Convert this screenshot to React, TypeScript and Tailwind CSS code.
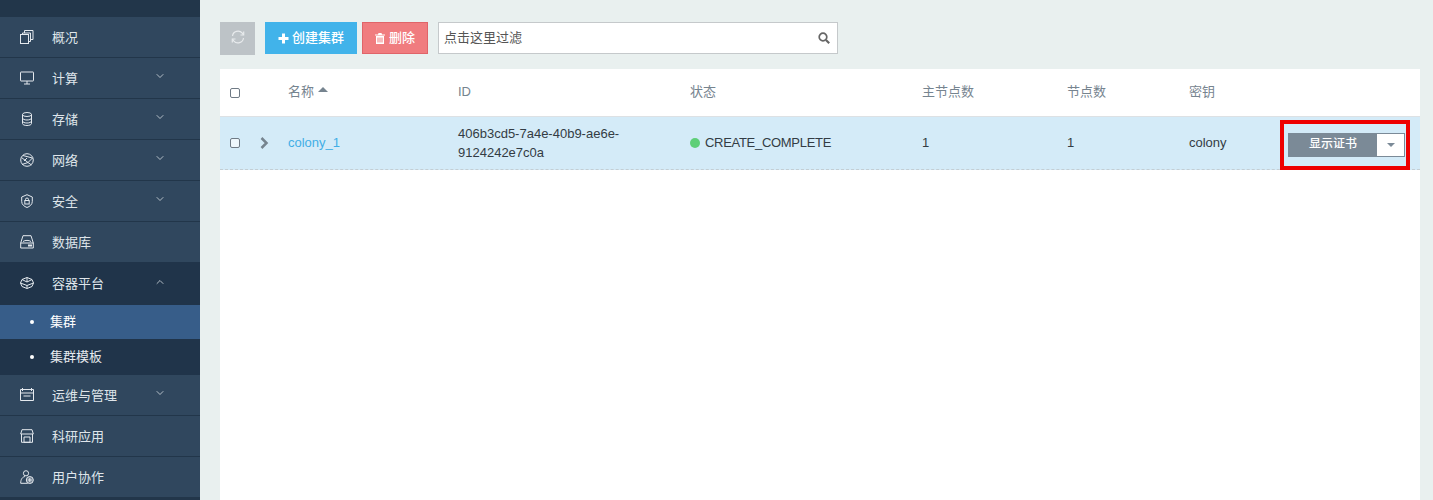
import { ChevronDown, ChevronUp } from 'lucide-react';
import type { ReactNode } from 'react';

const font = 'font-["Liberation_Sans","Noto_Sans_CJK_SC",sans-serif]';

function Icon({ children }: { children: ReactNode }) {
  return (
    <svg width="14" height="14" viewBox="0 0 14 14" fill="none" stroke="#e4e9ee" strokeWidth="1" className="mb-px shrink-0">
      {children}
    </svg>
  );
}

const icons: Record<string, ReactNode> = {
  overview: (
    <>
      <path d="M4.5 3V.5h8.5v9h-3" />
      <path d="M2.5 4.5V3h8v8.5H9" />
      <rect x="0.5" y="4.5" width="8" height="9" />
    </>
  ),
  compute: (
    <>
      <rect x="0.5" y="1" width="13" height="9" rx="0.5" />
      <path d="M7 10v3M4 13h6" />
    </>
  ),
  storage: (
    <>
      <ellipse cx="7" cy="2.5" rx="4.5" ry="2" />
      <path d="M2.5 2.5v9c0 1.2 2 2 4.5 2s4.5-.8 4.5-2v-9M2.5 6c0 1.2 2 2 4.5 2s4.5-.8 4.5-2M2.5 9c0 1.2 2 2 4.5 2s4.5-.8 4.5-2" />
    </>
  ),
  network: (
    <>
      <circle cx="7" cy="7" r="6.3" />
      <path d="M1.5 4.5 8 9.5l-6 2M3 2.5l9.5 2.5L8 9.5l3.5 2.5M7 5 4 8" />
    </>
  ),
  security: (
    <>
      <path d="M7 .7 12.3 3v4.5c0 3-2.5 5-5.3 6-2.800-1-5.300-3-5.300-6V3z" />
      <rect x="4.800" y="6.500" width="4.400" height="3.500" />
      <path d="M5.500 6.500V5.500a1.500 1.500 0 0 1 3 0v1" />
    </>
  ),
  database: (
    <>
      <path d="M3 .7h8l2.300 7.300v5H.7V8z" />
      <path d="M3 6.500c2-1.500 6-1.500 8 0M.7 8h12.600" />
      <rect x="8" y="9.500" width="4" height="2" fill="#e4e9ee" stroke="none" />
    </>
  ),
  container: (
    <>
      <path d="M7 1.500 12 3.500 13.500 7 12 10.500 7 12.500 2 10.500.5 7 2 3.500z" strokeLinejoin="round" />
      <path d="M2 3.500 7 6l5-2.500M7 1.500V6M.5 7 7 9.500 13.500 7M7 9.500v3" />
    </>
  ),
  ops: (
    <>
      <path d="M.5 1.500h13v11H.5z" />
      <path d="M2.500 0v3M11.500 0v3M0.500 5h13M3.500 8h7" />
    </>
  ),
  apps: (
    <>
      <path d="M2 .7h10l1.300 4.300H.7z" />
      <path d="M1.500 5v8.300h11V5M4 8h6v5.300H4z" />
    </>
  ),
  users: (
    <>
      <circle cx="6" cy="3.300" r="2.600" />
      <path d="M5 6.500C2.500 7 .7 9 .7 13.300h7" />
      <circle cx="9.800" cy="10" r="3.500" fill="#e4e9ee" fillOpacity="0.35" />
      <path d="M9.800 8v4M7.800 10h4" />
    </>
  ),
};

type NavItem = { label: string; icon: string; arrow?: boolean };

function NavRow({ label, icon, arrow }: NavItem) {
  return (
    <div className="flex h-10 items-center pl-5">
      <Icon>{icons[icon]}</Icon>
      <span className="ml-[18px] w-[102px] pt-px text-[13px] text-[#dfe5ea]">{label}</span>
      {arrow && <ChevronDown size={12} strokeWidth={1.500} className="mb-1 text-[#dfe5ea]" />}
    </div>
  );
}

const groupA: NavItem[] = [
  { label: '概况', icon: 'overview' },
  { label: '计算', icon: 'compute', arrow: true },
  { label: '存储', icon: 'storage', arrow: true },
  { label: '网络', icon: 'network', arrow: true },
  { label: '安全', icon: 'security', arrow: true },
  { label: '数据库', icon: 'database' },
];

const groupB: NavItem[] = [
  { label: '运维与管理', icon: 'ops', arrow: true },
  { label: '科研应用', icon: 'apps' },
  { label: '用户协作', icon: 'users' },
];

function Sidebar() {
  return (
    <aside className="flex h-[500px] w-[200px] shrink-0 flex-col bg-[#22364a]">
      <div className="h-[17px] shrink-0" />
      <div className="flex flex-col gap-px bg-[#22364a]">
        {groupA.map((item) => (
          <div key={item.label} className="bg-[#30475e]">
            <NavRow {...item} />
          </div>
        ))}
      </div>

      {/* open group */}
      <div className="bg-[#20344a]">
        <div className="flex h-[43px] items-center pl-5">
          <Icon>{icons.container}</Icon>
          <span className="ml-[18px] w-[102px] text-[13px] text-[#dfe5ea]">容器平台</span>
          <ChevronUp size={12} strokeWidth={1.500} className="mb-1 text-[#dfe5ea]" />
        </div>
        <div className="flex h-[34px] items-center bg-[#375d89] pl-[30px] text-[13px] text-white">
          <span className="mr-[16px] size-[4px] rounded-full bg-white" />
          集群
        </div>
        <div className="flex h-9 items-center pl-[30px] text-[13px] text-[#e6eaee]">
          <span className="mr-[16px] size-[4px] rounded-full bg-white" />
          集群模板
        </div>
      </div>

      <div className="flex flex-col gap-px bg-[#22364a]">
        {groupB.map((item) => (
          <div key={item.label} className="bg-[#30475e]">
            <NavRow {...item} />
          </div>
        ))}
      </div>
    </aside>
  );
}

function Checkbox() {
  return <span className="block size-[10px] rounded-[2px] border border-[#6f7a85] bg-white/60" />;
}

function Toolbar() {
  return (
    <div className="flex h-[33px] items-start">
      <button className="flex h-[33px] w-[35px] items-center justify-center pb-[3px] bg-[#bdc3c7]">
        <svg width="14" height="14" viewBox="0 0 14 14" fill="none" stroke="#e8ebed" strokeWidth="1.200">
          <path d="M1.500 6a5.500 5.500 0 0 1 9.800-2.800L12.500 5M12.500 8a5.500 5.500 0 0 1-9.800 2.800L1.500 9" />
          <path d="M12.700 1.500V5H9.500M1.300 12.500V9h3.200" />
        </svg>
      </button>
      <button className="ml-[10px] flex h-8 w-[92px] items-center justify-center gap-[3px] bg-[#41b3ea] text-[13px] font-medium text-white">
        <svg width="11" height="11" viewBox="0 0 11 11" fill="#fff">
          <path d="M4 .5h3V4h3.500v3H7v3.500H4V7H.5V4H4z" />
        </svg>
        创建集群
      </button>
      <button className="ml-[5px] flex h-8 w-[66px] items-center justify-center gap-1 border border-[#e06469] bg-[#f07c7f] text-[13px] font-medium text-white">
        <svg width="10" height="11" viewBox="0 0 10 11" fill="#fff">
          <path d="M3.500 0h3l.5 1.500h3v1H0v-1h3zM1 3h8v8H1zm1.500 1.500v5h1v-5zm2 0v5h1v-5zm2 0v5h1v-5z" fillRule="evenodd" />
        </svg>
        删除
      </button>
      <div className="ml-[10px] flex h-8 w-[400px] items-center justify-between border border-[#c5c9cb] bg-white pl-[5px] pr-[7px] text-[13px] text-[#555]">
        点击这里过滤
        <svg width="12" height="12" viewBox="0 0 12 12" fill="none" stroke="#666" strokeWidth="1.700">
          <circle cx="5" cy="5" r="3.800" />
          <path d="m8 8 3.200 3.200" strokeWidth="2.200" />
        </svg>
      </div>
    </div>
  );
}

function Table() {
  return (
    <div className="mt-[14px] min-h-0 flex-1 bg-white text-[13px]">
      <div className="grid h-[48px] grid-cols-[68px_170px_232px_232px_145px_122px_1fr] items-center border-b border-[#dde1e4] pb-[2px] text-[#76848f]">
        <div className="pl-[10px] pt-[2px]"><Checkbox /></div>
        <div className="flex items-center gap-1">
          名称
          <span className="mb-1 size-0 border-x-[5px] border-b-[5px] border-x-transparent border-b-[#76848f]" />
        </div>
        <div>ID</div>
        <div>状态</div>
        <div>主节点数</div>
        <div>节点数</div>
        <div>密钥</div>
      </div>

      <div className="grid h-[53px] grid-cols-[68px_170px_232px_232px_145px_122px_1fr] items-center border-b border-dashed border-[#c4ced4] bg-[#d4ebf8] leading-[19px] text-[#333c44]">
        <div className="flex items-center pl-[10px]">
          <Checkbox />
          <svg width="9" height="12" viewBox="0 0 9 12" fill="none" stroke="#76848f" strokeWidth="2.500" className="mb-px ml-[20px]">
            <path d="M1.500 1 6.500 6l-5 5" />
          </svg>
        </div>
        <div className="pb-[2px] text-[#41aee6]">colony_1</div>
        <div className="w-[190px]">406b3cd5-7a4e-40b9-ae6e-9124242e7c0a</div>
        <div className="flex items-center gap-[5px] pb-[2px] tracking-[-0.3px]">
          <span className="mt-[2px] size-[10px] rounded-full bg-[#5ecf78]" />
          CREATE_COMPLETE
        </div>
        <div className="pb-[2px]">1</div>
        <div className="pb-[2px]">1</div>
        <div className="relative h-full">
          <span className="absolute left-0 top-[16px]">colony</span>
          {/* annotation box over the action button */}
          <div className="absolute left-[91px] top-[3px] flex h-[50px] w-[130px] items-center justify-end border-4 border-[#ee0000] pr-[1px]">
            <div className="flex h-6 w-[117px] border border-[#7b8a97]">
              <span className="flex w-[88px] items-center justify-center bg-[#7b8a97] pb-px text-[12px] font-medium text-white">显示证书</span>
              <span className="flex flex-1 items-center justify-center bg-white">
                <span className="size-0 border-x-[4px] border-t-[4px] border-x-transparent border-t-[#7b8a97]" />
              </span>
            </div>
          </div>
        </div>
      </div>
    </div>
  );
}

export default function App() {
  return (
    <div className={`flex h-[500px] w-[1433px] overflow-hidden bg-[#e9f0ef] ${font}`}>
      <Sidebar />
      <main className="box-content flex w-[1200px] flex-col pl-5 pt-[22px]">
        <Toolbar />
        <Table />
      </main>
    </div>
  );
}
